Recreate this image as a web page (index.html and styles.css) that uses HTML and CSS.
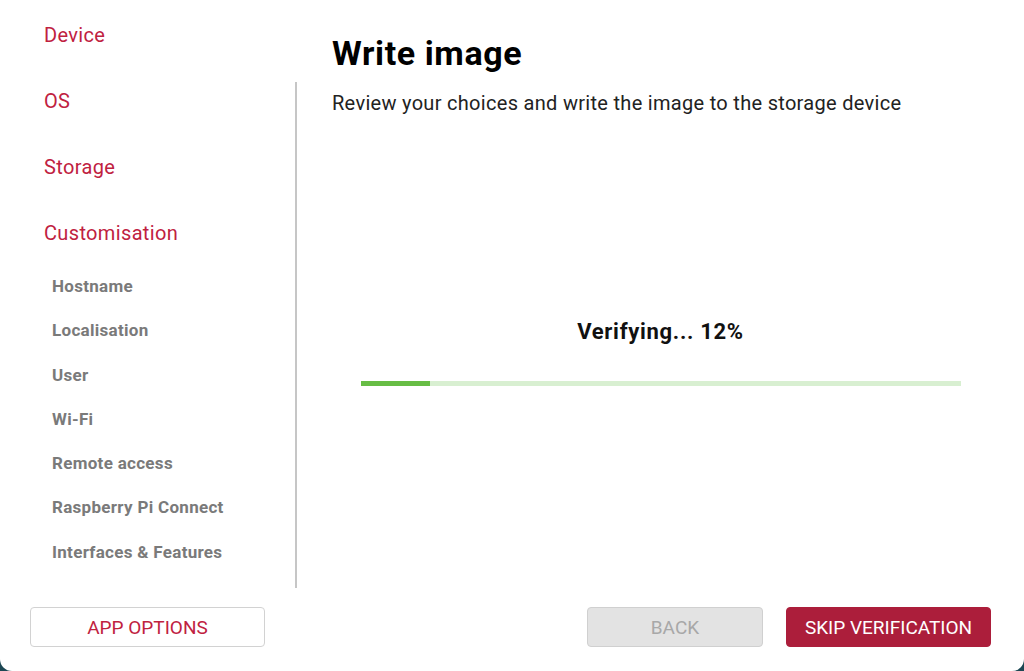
FILE: index.html
```html
<!DOCTYPE html>
<html lang="en">
<head>
<meta charset="utf-8">
<title>Write image</title>
<link rel="stylesheet" href="styles.css">
</head>
<body>
<div class="window">
  <div class="content">
    <nav class="sidebar">
      <ul class="steps">
        <li class="step">Device</li>
        <li class="step">OS</li>
        <li class="step">Storage</li>
        <li class="step">Customisation</li>
      </ul>
      <ul class="substeps">
        <li>Hostname</li>
        <li>Localisation</li>
        <li>User</li>
        <li>Wi-Fi</li>
        <li>Remote access</li>
        <li>Raspberry Pi Connect</li>
        <li>Interfaces &amp; Features</li>
      </ul>
    </nav>
    <div class="divider"></div>
    <main class="main">
      <h1 class="title">Write image</h1>
      <p class="subtitle">Review your choices and write the image to the storage device</p>
      <div class="progress-area">
        <div class="status">Verifying... 12%</div>
        <div class="bar"><div class="fill" style="width:11.5%"></div></div>
      </div>
    </main>
  </div>
  <footer class="footer">
    <button class="btn btn-outline">APP OPTIONS</button>
    <div class="spacer"></div>
    <button class="btn btn-disabled">BACK</button>
    <button class="btn btn-primary">SKIP VERIFICATION</button>
  </footer>
</div>
</body>
</html>
```

FILE: styles.css
```css
* { box-sizing: border-box; }
html, body { margin: 0; padding: 0; }
body {
  width: 1024px;
  height: 671px;
  overflow: hidden;
  background: #1c4753;
  font-family: Roboto, "Liberation Sans", sans-serif;
}
.window {
  width: 1024px;
  height: 671px;
  background: #ffffff;
  border-radius: 0 0 12px 12px;
  display: flex;
  flex-direction: column;
}
.content {
  display: flex;
  height: 588px;
}
.sidebar {
  width: 295px;
  flex: none;
  padding-left: 44px;
  padding-top: 22px;
}
.steps, .substeps {
  list-style: none;
  margin: 0;
  padding: 0;
}
.step {
  color: #c0213f;
  font-size: 20px;
  letter-spacing: 0.35px;
  line-height: 26px;
  height: 26px;
  margin-bottom: 40px;
}
.step:last-child { margin-bottom: 0; }
.substeps {
  padding-left: 8px;
  margin-top: 29px;
}
.substeps li {
  color: #7a7a7a;
  font-weight: 700;
  font-size: 17px;
  letter-spacing: 0.3px;
  line-height: 22px;
  height: 22px;
  margin-bottom: 22.3px;
}
.divider {
  width: 2px;
  flex: none;
  background: #c6c6c6;
  margin-top: 82px;
  height: 506px;
}
.main {
  flex: 1;
  padding-left: 35px;
  padding-top: 33px;
  display: flex;
  flex-direction: column;
}
.title {
  margin: 0;
  font-size: 34px;
  letter-spacing: 0.6px;
  line-height: 40px;
  font-weight: 700;
  color: #000;
}
.subtitle {
  margin: 18px 0 0 0;
  font-size: 20px;
  letter-spacing: 0.3px;
  line-height: 24px;
  color: #222;
}
.progress-area {
  margin-left: -35px;
  margin-top: 204px;
  display: flex;
  flex-direction: column;
  align-items: center;
}
.status {
  font-size: 22px;
  font-weight: 700;
  letter-spacing: 0.7px;
  line-height: 26px;
  color: #111;
}
.bar {
  margin-top: 36px;
  width: 600px;
  height: 5px;
  background: #d8efd1;
}
.fill {
  height: 100%;
  background: #67bd45;
}
.footer {
  display: flex;
  align-items: flex-start;
  padding: 19px 33px 0 30px;
  gap: 23px;
}
.spacer { flex: 1; }
.btn {
  height: 40px;
  border-radius: 4px;
  font-family: Roboto, "Liberation Sans", sans-serif;
  font-size: 19px;
  padding: 0;
  cursor: pointer;
}
.btn-outline {
  width: 235px;
  background: #fff;
  border: 1px solid #d2d2d2;
  color: #c0213f;
}
.btn-disabled {
  width: 176px;
  background: #e3e3e3;
  border: 1px solid #d0d0d0;
  color: #a8a8a8;
}
.btn-primary {
  width: 205px;
  background: #ac1e3b;
  border: 1px solid #ac1e3b;
  color: #fff;
}
```
